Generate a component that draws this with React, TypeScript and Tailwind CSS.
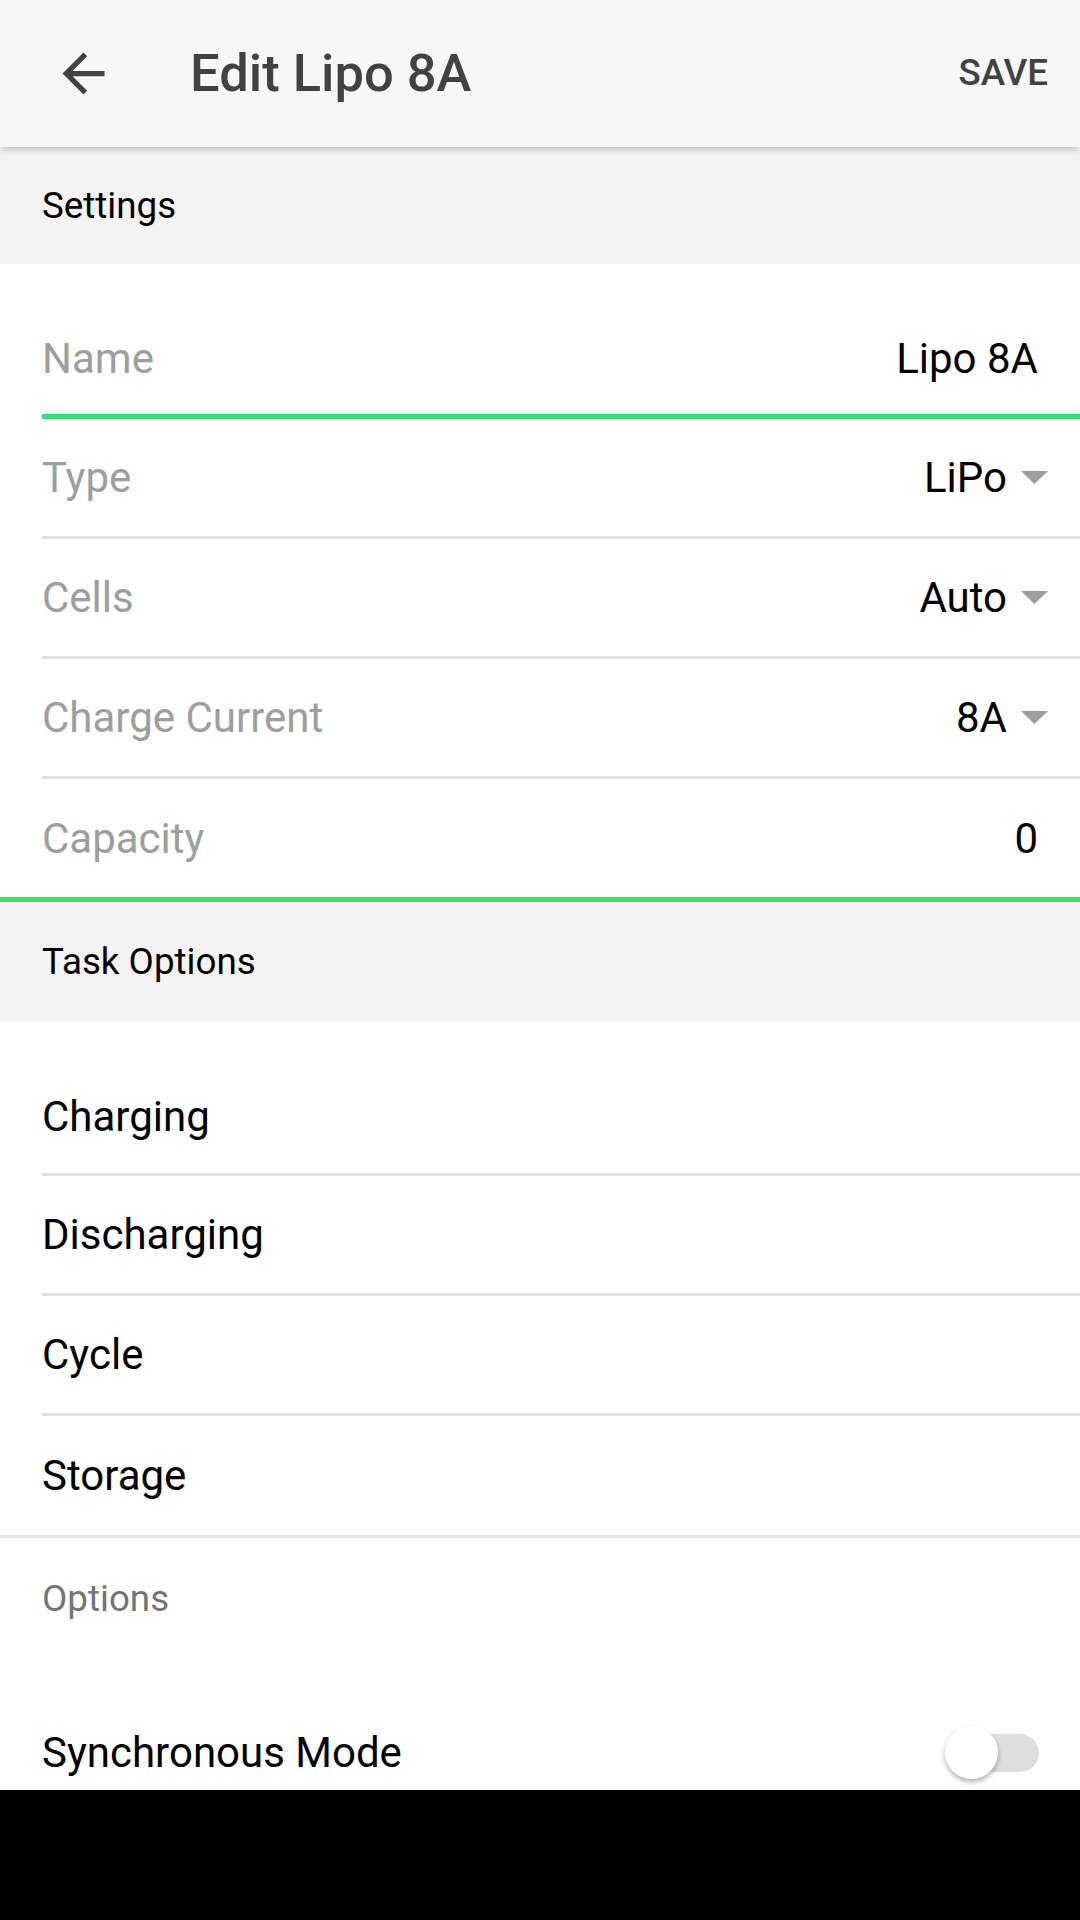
import React, { useState } from "react";

interface Field {
  label: string;
  value: string;
  dropdown?: boolean;
}

const fields: Field[] = [
  { label: "Type", value: "LiPo", dropdown: true },
  { label: "Cells", value: "Auto", dropdown: true },
  { label: "Charge Current", value: "8A", dropdown: true },
];

const tasks = ["Charging", "Discharging", "Cycle"];

// petit triangle gris des menus déroulants
const Caret = () => (
  <svg width="27" height="13" viewBox="0 0 27 13" className="ml-[14px]">
    <path d="M0 0h27L13.5 13z" fill="#9e9e9e" />
  </svg>
);

const App: React.FC = () => {
  const [sync, setSync] = useState(false);

  return (
    <div className="w-[1080px] h-[1920px] bg-white flex flex-col overflow-hidden font-['Roboto','Noto_Sans',sans-serif]">
      {/* Toolbar */}
      <div className="relative z-10 h-[147px] shrink-0 bg-[#f7f7f7] flex items-center pl-[52px] pr-[32px] shadow-[0_3px_6px_rgba(0,0,0,0.18)]">
        <svg width="63" height="63" viewBox="0 0 24 24">
          <path
            d="M20 11H7.83l5.59-5.59L12 4l-8 8 8 8 1.41-1.41L7.83 13H20v-2z"
            fill="#424242"
          />
        </svg>
        <div className="ml-[75px] text-[52.5px] font-medium text-[#424242] leading-none">
          Edit Lipo 8A
        </div>
        <div className="ml-auto text-[36.75px] font-medium text-[#424242] leading-none">
          SAVE
        </div>
      </div>

      <div className="flex-1 flex flex-col overflow-hidden">
        {/* Settings */}
        <div className="h-[117px] shrink-0 bg-[#f3f3f3] flex items-center pl-[42px] text-[36.75px] text-black">
          Settings
        </div>

        <div className="pl-[42px]">
          <div className="h-[155px] pt-[38px] border-b-[5px] border-[#3ddc6b] flex items-center pr-[42px] text-[42px]">
            <span className="text-[#9e9e9e]">Name</span>
            <span className="ml-auto text-black">Lipo 8A</span>
          </div>
          {fields.map(f => (
            <div
              key={f.label}
              className="h-[120px] border-b-[3px] border-[#e3e3e3] flex items-center pr-[32px] text-[42px]"
            >
              <span className="text-[#9e9e9e]">{f.label}</span>
              <span className="ml-auto text-black">{f.value}</span>
              <Caret />
            </div>
          ))}
          <div className="h-[118px] flex items-center pr-[42px] text-[42px]">
            <span className="text-[#9e9e9e]">Capacity</span>
            <span className="ml-auto text-black">0</span>
          </div>
        </div>
        <div className="h-[5px] shrink-0 bg-[#3ddc6b]" />

        {/* Task Options */}
        <div className="h-[120px] shrink-0 bg-[#f3f3f3] flex items-center pl-[42px] text-[36.75px] text-black">
          Task Options
        </div>

        <div className="pl-[42px]">
          {tasks.map((t, i) => (
            <div
              key={t}
              className={`${i === 0 ? "h-[154px] pt-[37px]" : "h-[120px]"} border-b-[3px] border-[#e3e3e3] flex items-center text-[42px] text-black`}
            >
              {t}
            </div>
          ))}
          <div className="h-[119px] flex items-center text-[42px] text-black">
            Storage
          </div>
        </div>
        <div className="h-[3px] shrink-0 bg-[#e3e3e3]" />

        {/* Options */}
        <div className="h-[122px] shrink-0 flex items-center pl-[42px] text-[36.75px] text-[#757575]">
          Options
        </div>
        <div className="h-[129px] shrink-0 pt-[56px] flex items-center pl-[42px] pr-[41px]">
          <span className="text-[42px] text-black">Synchronous Mode</span>
          <button
            className="ml-auto relative w-[94px] h-[53px]"
            onClick={() => setSync(s => !s)}
          >
            <span
              className={`absolute right-0 top-[7.5px] w-[89px] h-[38px] rounded-full ${
                sync ? "bg-[#a5ecb8]" : "bg-[#dedede]"
              }`}
            />
            <span
              className={`absolute top-0 w-[53px] h-[53px] rounded-full shadow-[0_3px_5px_rgba(0,0,0,0.3)] ${
                sync ? "left-[41px] bg-[#3ddc6b]" : "left-0 bg-white"
              }`}
            />
          </button>
        </div>
      </div>

      {/* barre de navigation */}
      <div className="h-[130px] shrink-0 bg-black" />
    </div>
  );
};

export default App;
